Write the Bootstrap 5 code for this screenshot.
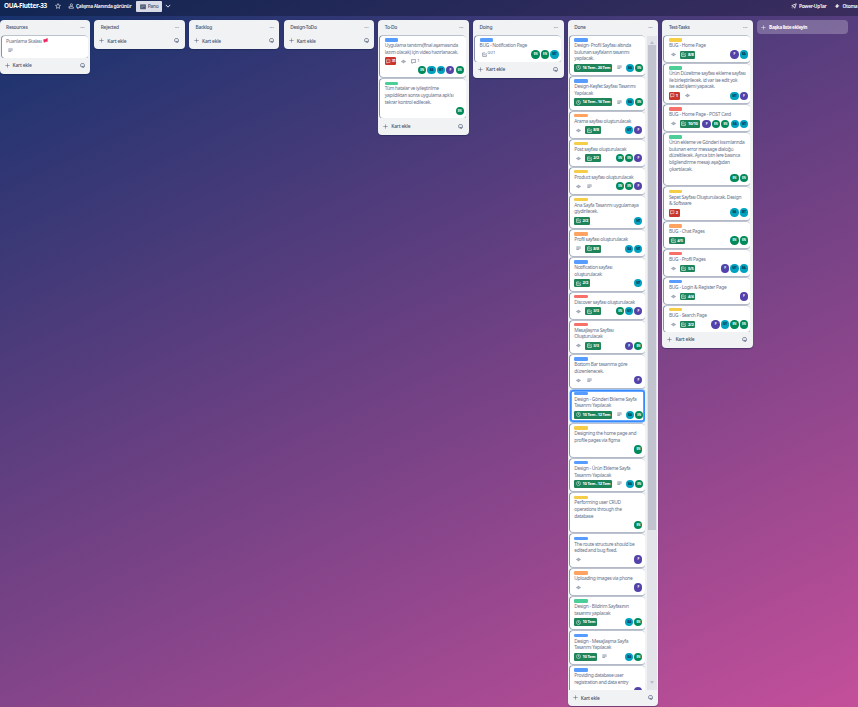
<!DOCTYPE html>
<html lang="tr">
<head>
<meta charset="utf-8">
<meta name="viewport" content="width=device-width, initial-scale=1">
<title>OUA-Flutter-33</title>
<link href="https://cdn.jsdelivr.net/npm/bootstrap@5.3.0/dist/css/bootstrap.min.css" rel="stylesheet">
<style>
html,body{height:100%}
body{font-family:"Noto Sans","Open Sans",sans-serif;font-size:4.9px;line-height:6.6px;letter-spacing:-.28px;color:#44546f;overflow:hidden;
 background:linear-gradient(155deg,#14326c 0%,#c44f9a 100%) fixed}
svg{display:block;flex:none;fill:none;stroke:currentColor;stroke-width:1.5}
.topbar{height:16px;background:rgba(12,16,38,.36);color:#fff;font-weight:600;white-space:nowrap;position:relative}
.topbar svg{width:6px;height:6px}
.topbar-left{padding-left:4px;height:12.5px}
.topbar-right{padding-left:791px;height:12.5px;top:0;left:0}
.gap-icon{margin-right:2px}
.board-name{font-size:6.4px;font-weight:700;width:50.5px;letter-spacing:-.33px}
.vis{width:60px;margin-left:7.5px}
.pano{background:#d9dce6;color:#44546f;height:11px;width:26px;border-radius:1px;margin-top:1px;font-weight:500}
.chevron{margin-left:3px}
.board{padding-top:4px;gap:4.2px;margin-left:-.4px}
.board-list{width:90.5px;background:#f1f2f4;border-radius:4px;box-shadow:0 .5px 1px rgba(9,30,66,.4);flex:none}
.list-head{height:13px;padding:2px 5.5px 0 6.5px;font-weight:500}
.dots{letter-spacing:.1px;font-size:5px}
.add-row{height:16.2px;padding:0 5.5px .6px 5px;font-weight:500;letter-spacing:-.2px}
.add-row svg,.new-list svg{width:5px;height:5px}
.add-label{margin-left:3px}
.stack{padding:3px 2.5px 0 2px;gap:2px;overflow:hidden}
.task{background:#fff;border-radius:3px;box-shadow:-.7px -.3px 0 .3px #8792a8,0 1px .5px #b3b9c6;padding:2.3px 2.5px 2.8px 4.5px;flex:none;min-height:21.8px;white-space:nowrap;color:#66728a}
.task.plain{padding-bottom:0}
.task.focus-card{box-shadow:inset 0 0 0 1.8px #388bff,0 0 0 .4px #388bff}
.tag{height:3.3px;width:13.5px;border-radius:1.3px}
.blue{background:#579dff}.green{background:#4bce97}.orange{background:#fea362}.yellow{background:#f5cd47}.red{background:#f87168}
.task-title{margin-top:.6px}
.plain .task-title{margin-top:-.3px}
.flag{width:5px;height:5px;margin-left:1.5px;display:inline-block;vertical-align:-.3px;color:#f0245e}
.meta{height:10.2px;gap:2.8px;margin-top:.2px;padding-top:1.2px}
.meta svg{width:5px;height:5px;margin-left:2px;margin-right:.9px}
.pill{height:7.8px;border-radius:1.2px;color:#fff;font-size:4.1px;font-weight:700;line-height:7.8px;padding-right:2px;background:#1f845a}
.meta .pill svg{margin-left:1.8px;margin-right:1.5px}
.pill.late{background:#c9372c;width:11px;letter-spacing:-.5px}
.meta .pill.late svg{margin-right:.8px;margin-left:1.5px;width:4.5px}
.count{font-size:4.2px}
.count.raised{margin-top:-3px}
.people{height:8.4px;gap:.8px}
.done-list .people{margin-right:.3px}
.meta+.people{margin-top:.3px}
.wide .people{gap:1.1px}
.face{width:8.3px;height:8.3px;border-radius:50%;font-size:2.9px;line-height:8.3px;font-weight:700;text-align:center;letter-spacing:-.1px}
.en{background:#008a5a;color:#fff}.ba,.mt{background:#00a3bf;color:#172b4d}.pp{background:#5243aa;color:#fff}
.done-list{height:686px}
.done-body{height:657px;padding-right:1px}
.done-body .stack{width:77.5px;height:657px;padding-right:0}
.track{width:10.5px;margin-top:3px;background:#e2e4ea;padding:2px 0}
.thumb{width:7.5px;height:485px;background:#c1c4cf;margin-top:1px}
.tri{width:0;height:0;border:2.5px solid transparent}
.tri-up{border-bottom:3px solid #b9bcc5;border-top:0;margin-top:2.5px}
.tri-down{border-top:3px solid #b9bcc5;border-bottom:0;margin-bottom:4px}
.new-list{width:90.5px;height:14px;background:rgba(255,255,255,.24);border-radius:4px;color:#fff;font-weight:700;letter-spacing:-.38px;padding-left:4px}
</style>
<script src="https://cdn.jsdelivr.net/npm/bootstrap@5.3.0/dist/js/bootstrap.bundle.min.js"></script>
</head>
<body>
<svg width="0" height="0" class="position-absolute">
<symbol id="plus" viewBox="0 0 16 16"><path d="M8 1v14M1 8h14"/></symbol>
<symbol id="tpl" viewBox="0 0 16 16"><path d="M4 2h8l2 3v5l-3 3H5l-3-3V5zM5 11h6M9 13l3 1 2-3" stroke-width="2"/></symbol>
<symbol id="eye" viewBox="0 0 16 16"><path d="M1 8Q8 0 15 8Q8 16 1 8z"/><circle cx="8" cy="8" r="2.4" stroke-width="2"/></symbol>
<symbol id="desc" viewBox="0 0 16 16"><path d="M1 3h14M1 7h14M1 11h9" stroke-width="2"/></symbol>
<symbol id="check" viewBox="0 0 16 16"><path d="M14 8v6H2V3h8M5 7l3 3 7-7" stroke-width="2"/></symbol>
<symbol id="clock" viewBox="0 0 16 16"><circle cx="8" cy="8" r="6.5"/><path d="M8 4v4l3 2" stroke-width="2"/></symbol>
<symbol id="chat" viewBox="0 0 16 16"><path d="M1 2h14v9H7l-4 3v-3H1z" stroke-width="2"/></symbol>
<symbol id="star" viewBox="0 0 16 16"><path d="M8 1.500l2 4.300 4.700.6-3.500 3.200.9 4.700L8 12l-4.100 2.300.9-4.700L1.300 6.400l4.700-.6z"/></symbol>
<symbol id="users" viewBox="0 0 16 16"><circle cx="9" cy="5" r="3"/><path d="M3 14q0-5 6-5t6 5zM1 12l3-4"/></symbol>
<symbol id="pano" viewBox="0 0 16 16"><path d="M1 2h14v11H1z" fill="currentColor"/><path d="M5.500 4v6M10.500 4v4" stroke="#d9dce6"/></symbol>
<symbol id="chev" viewBox="0 0 16 16"><path d="M2 5l6 6 6-6" stroke-width="2.200"/></symbol>
<symbol id="rocket" viewBox="0 0 16 16"><path d="M2 7l12-5-4 12-3-4zM7 10l3-3M2 12l2 1" stroke-width="2"/></symbol>
<symbol id="bolt" viewBox="0 0 16 16"><path d="M9 3L4 9h4l-1 4 6-6H9z" fill="currentColor"/></symbol>
<symbol id="flag" viewBox="0 0 16 16"><path d="M2 5l7-1 5-3v10l-7 1-4 2z" fill="currentColor"/></symbol>
</svg>

<header class="topbar">
  <div class="topbar-left d-flex align-items-center">
    <span class="board-name">OUA-Flutter-33</span>
    <svg><use href="#star"/></svg>
    <span class="vis d-flex align-items-center"><svg class="gap-icon"><use href="#users"/></svg><span>Çalışma Alanında görünür</span></span>
    <span class="pano d-flex align-items-center justify-content-center ms-2"><svg class="gap-icon"><use href="#pano"/></svg>Pano</span>
    <svg class="chevron"><use href="#chev"/></svg>
  </div>
  <div class="topbar-right position-absolute d-flex align-items-center">
    <svg class="gap-icon"><use href="#rocket"/></svg><span>Power-Up'lar</span>
    <svg class="ms-2 gap-icon"><use href="#bolt"/></svg><span>Otoma</span>
  </div>
</header>
<main class="board d-flex align-items-start" id="lists"></main>

<script>
const icon = n => `<svg><use href="#${n}"/></svg>`;
// badge codes: eye, desc, check:text, clock:text, late:text, todo:text, chat:text
const badge = b => {
  const [k, t] = b.split(/:(.*)/);
  if (k === 'eye' || k === 'desc') return icon(k);
  if (k === 'chat' || k === 'todo') return `<span class="d-flex align-items-center">${icon(k === 'chat' ? 'chat' : 'check')}<span class="count ${k === 'todo' ? 'raised' : ''}">${t}</span></span>`;
  return `<span class="pill d-flex align-items-center ${k === 'late' ? 'late' : ''}">${icon(k === 'late' ? 'chat' : k)}${t}</span>`;
};
const initials = {e: ['en', 'EN'], b: ['ba', 'BA'], m: ['mt', 'MT'], p: ['pp', 'P'], x: ['pp', '']};
const faces = s => `<div class="people d-flex justify-content-end ms-auto">${[...s].map(c => `<span class="face ${initials[c][0]}">${initials[c][1]}</span>`).join('')}</div>`;
const task = ([tag, title, badges = '', people = '', opt = '']) => `<article class="task ${opt}">
  ${tag ? `<div class="tag ${tag}"></div>` : ''}
  <div class="task-title">${title.split('|').map(l => `<div>${l}</div>`).join('')}</div>
  <div class="meta d-flex align-items-center">${badges ? badges.split(',').map(badge).join('') : ''}${opt !== 'split' ? faces(people) : ''}</div>
  ${opt === 'split' ? faces(people) : ''}</article>`;
const addRow = `<div class="add-row d-flex align-items-center">${icon('plus')}<span class="add-label">Kart ekle</span><span class="ms-auto">${icon('tpl')}</span></div>`;
const lists = [
 ['Resources', [['', 'Puanlama Skalası<svg class="flag"><use href="#flag"/></svg>', 'desc', '', 'plain']]],
 ['Rejected', []], ['Backlog', []], ['Design-ToDo', []],
 ['To-Do', [
  ['blue', 'Uygulama tanıtımı(final aşamasında|lazım olacak) için video hazırlanacak.', 'late:31,eye,chat:1', 'ebmpe', 'split'],
  ['green', 'Tüm hatalar ve iyileştirilme|yapıldıktan sonra uygulama apk\'sı|tekrar kontrol edilecek.', '', 'e']]],
 ['Doing', [['blue', 'BUG - Notification Page', 'todo:0/21', 'eem']]],
 ['Done', [
  ['blue', 'Design- Profil Sayfası altında|bulunan sayfaların tasarımı|yapılacak.', 'clock:16 Tem - 20 Tem,desc', 'be'],
  ['blue', 'Design-Keşfet Sayfası Tasarımı|Yapılacak', 'clock:14 Tem - 16 Tem,desc', 'be'],
  ['orange', 'Arama sayfası oluşturulacak', 'eye,check:8/8', 'mp'],
  ['yellow', 'Post sayfası oluşturulacak', 'eye,check:2/2', 'eep'],
  ['yellow', 'Product sayfası oluşturulacak', 'eye,desc', 'eep'],
  ['yellow', 'Ana Sayfa Tasarımı uygulamaya|giydirilecek.', 'check:2/2', 'm'],
  ['orange', 'Profil sayfası oluşturulacak', 'desc,check:8/8', 'bm'],
  ['blue', 'Notification sayfası|oluşturulacak', 'check:2/2', 'm'],
  ['red', 'Discover sayfası oluşturulacak', 'eye,check:3/3', 'emp'],
  ['red', 'Mesajlaşma Sayfası|Oluşturulacak', 'eye,check:3/3', 'pe'],
  ['blue', 'Bottom Bar tasarıma göre|düzenlenecek.', 'eye,desc', 'p'],
  ['blue', 'Design - Gönderi Ekleme Sayfa|Tasarımı Yapılacak', 'clock:10 Tem - 12 Tem,desc', 'be', 'focus-card'],
  ['yellow', 'Designing the home page and|profile pages via figma', '', 'e'],
  ['blue', 'Design - Ürün Ekleme Sayfa|Tasarımı Yapılacak', 'clock:10 Tem - 12 Tem,desc', 'be'],
  ['yellow', 'Performing user CRUD|operations through the|database', '', 'e'],
  ['blue', 'The route structure should be|edited and bug fixed.', 'eye', 'p'],
  ['orange', 'Uploading images via phone', 'eye', 'p'],
  ['green', 'Design - Bildirim Sayfasının|tasarımı yapılacak', 'clock:10 Tem', 'be'],
  ['blue', 'Design - Mesajlaşma Sayfa|Tasarımı Yapılacak', 'clock:10 Tem,desc', 'be'],
  ['blue', 'Providing database user|registration and data entry', '', 'x']]],
 ['Test-Tasks', [
  ['yellow', 'BUG - Home Page', 'eye,check:8/8', 'pb'],
  ['green', 'Ürün Düzeltme sayfası ekleme sayfası|ile birleştirilecek. id var ise edit yok|ise add işlemi yapacak.', 'late:1,eye', 'mp'],
  ['red', 'BUG - Home Page - POST Card', 'eye,check:10/10', 'peebm'],
  ['green', 'Ürün ekleme ve Gönderi kısımlarında|bulunan error message dialoğu|düzeltilecek. Ayrıca btn lere basınca|bilgilendirme mesajı aşağıdan|çıkartılacak.', '', 'ee'],
  ['yellow', 'Sepet Sayfası Oluşturulacak. Design|&amp; Software', 'late:2', 'bm'],
  ['orange', 'BUG - Chat Pages', 'check:4/5', 'ee'],
  ['red', 'BUG - Profil Pages', 'eye,check:5/5', 'pmb'],
  ['blue', 'BUG - Login &amp; Register Page', 'eye,check:4/4', 'p'],
  ['yellow', 'BUG - Search Page', 'eye,check:2/2', 'pmee']]]
];
document.getElementById('lists').innerHTML = lists.map(([name, cards]) => {
  const done = name === 'Done';
  const stack = cards.length ? `<div class="stack d-flex flex-column">${cards.map(task).join('')}</div>` : '';
  return `<section class="board-list ${done ? 'done-list' : 'wide'}"><div class="list-head d-flex align-items-center justify-content-between"><span>${name}</span><span class="dots">···</span></div>${
    done ? `<div class="done-body d-flex">${stack}<div class="track d-flex flex-column align-items-center ms-auto"><i class="tri tri-up"></i><div class="thumb"></div><i class="tri tri-down mt-auto"></i></div></div>` : stack}${addRow}</section>`;
}).join('') + `<div class="new-list d-flex align-items-center">${icon('plus')}<span class="add-label">Başka liste ekleyin</span></div>`;
</script>
</body>
</html>
